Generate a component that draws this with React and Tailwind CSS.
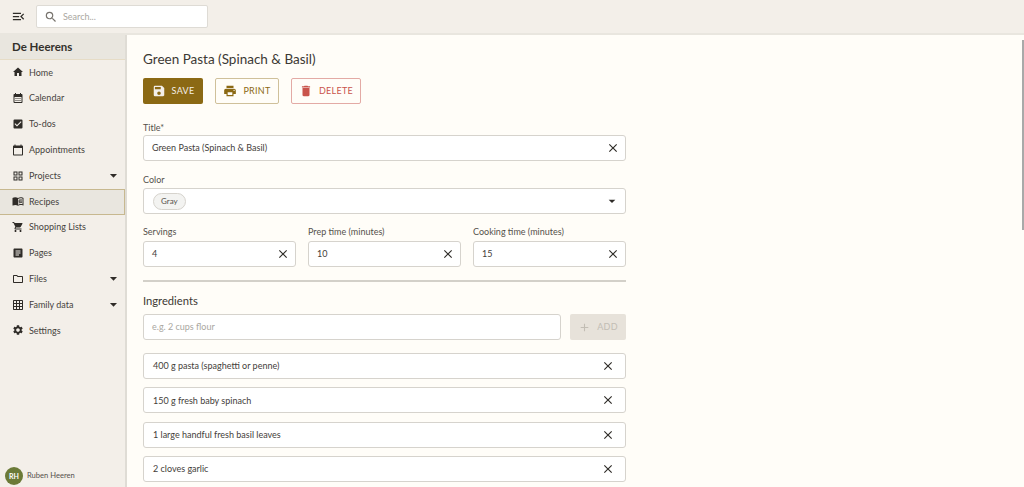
import {
  MdAdd,
  MdArrowDropDown,
  MdArticle,
  MdCalendarMonth,
  MdCalendarToday,
  MdCheckBox,
  MdClose,
  MdDelete,
  MdGridOn,
  MdHome,
  MdMenuBook,
  MdMenuOpen,
  MdOutlineFolder,
  MdOutlineGridView,
  MdPrint,
  MdSave,
  MdSearch,
  MdSettings,
  MdShoppingCart,
} from "react-icons/md";

const navItems = [
  { label: "Home", icon: MdHome },
  { label: "Calendar", icon: MdCalendarMonth },
  { label: "To-dos", icon: MdCheckBox },
  { label: "Appointments", icon: MdCalendarToday },
  { label: "Projects", icon: MdOutlineGridView, arrow: true },
  { label: "Recipes", icon: MdMenuBook, active: true },
  { label: "Shopping Lists", icon: MdShoppingCart },
  { label: "Pages", icon: MdArticle },
  { label: "Files", icon: MdOutlineFolder, arrow: true },
  { label: "Family data", icon: MdGridOn, arrow: true },
  { label: "Settings", icon: MdSettings },
];

const ingredients = [
  "400 g pasta (spaghetti or penne)",
  "150 g fresh baby spinach",
  "1 large handful fresh basil leaves",
  "2 cloves garlic",
];

const Field = ({ label, value, className = "", gap = "mb-[2px]" }) => (
  <div className={className}>
    <div className={`text-[9px] leading-[14px] pt-[1px] text-[#55514b] ${gap}`}>{label}</div>
    <div className="h-[26px] flex items-center justify-between bg-white border border-[#d6d3cd] rounded-[3px] pl-[8px] pr-[5px] text-[9px] text-[#44403a]">
      <span>{value}</span>
      <MdClose className="text-[14px] text-[#2f2c28]" />
    </div>
  </div>
);

const App = () => {
  return (
    <div className="h-screen overflow-hidden flex flex-col bg-[#fffdf8] font-['Lato','Noto_Sans',sans-serif] text-[#3c3934]">
      <header className="h-[35px] shrink-0 flex items-center bg-[#f3efe9] border-b-2 border-[#e9e6df] pl-[11px]">
        <MdMenuOpen className="text-[15px] text-[#2f2c28]" />
        <div className="ml-[10px] w-[172px] h-[23px] flex items-center bg-white border border-[#dedbd5] rounded-[2px] pl-[7px]">
          <MdSearch className="text-[14px] text-[#77736d]" />
          <span className="ml-[5px] text-[9px] text-[#aaa7a1]">Search...</span>
        </div>
      </header>

      <div className="flex-1 flex min-h-0 relative">
        <aside className="w-[127px] shrink-0 flex flex-col bg-[#f3efe9] border-r-2 border-[#dfdcd5]">
          <div className="h-[25px] flex items-center pl-[12px] bg-[#e9e6df] border-b border-[#e6dcc6] text-[11.5px] font-bold text-[#33302b]">
            De Heerens
          </div>
          <nav className="flex flex-col">
            {navItems.map((item) => (
              <div
                key={item.label}
                className={`h-[25.8px] flex items-center pl-[12px] pr-[3px] pb-[1px] text-[9px] text-[#46433d] ${
                  item.active ? "bg-[#e9e6df] border-y border-r border-[#c7b88f]" : ""
                }`}
              >
                <item.icon className="text-[12px] text-[#2f2c28] shrink-0" />
                <span className="ml-[5px] flex-1">{item.label}</span>
                {item.arrow && <MdArrowDropDown className="text-[17px] text-[#2f2c28]" />}
              </div>
            ))}
          </nav>
          <div className="mt-auto h-[22px] flex items-center pl-[5px]">
            <div className="w-[18px] h-[18px] rounded-full bg-[#6b7a37] text-white text-[7px] font-bold flex items-center justify-center">
              RH
            </div>
            <span className="ml-[4px] text-[7.6px] text-[#55514b]">Ruben Heeren</span>
          </div>
        </aside>

        <main className="flex-1 min-w-0 pl-[16px] pt-[14px]">
          <div className="w-[483px]">
            <h1 className="text-[13.5px] leading-[21px] text-[#3c3934]">Green Pasta (Spinach &amp; Basil)</h1>

            <div className="flex gap-[12px] mt-[8px]">
              <button className="h-[26px] w-[60px] flex items-center justify-center gap-[6px] bg-[#8b6914] rounded-[2px] text-[9px] tracking-[0.3px] text-[#f3efe9]">
                <MdSave className="text-[14px]" />
                SAVE
              </button>
              <button className="h-[26px] w-[64px] flex items-center justify-center gap-[6px] border border-[#cfc09a] rounded-[2px] text-[9px] tracking-[0.3px] text-[#8b6914]">
                <MdPrint className="text-[14px]" />
                PRINT
              </button>
              <button className="h-[26px] w-[70px] flex items-center justify-center gap-[6px] border border-[#e3aaa5] rounded-[2px] text-[9px] tracking-[0.3px] text-[#c9544c]">
                <MdDelete className="text-[14px]" />
                DELETE
              </button>
            </div>

            <Field label="Title*" value="Green Pasta (Spinach & Basil)" className="mt-[16px]" gap="mb-[0px]" />

            <div className="mt-[11px]">
              <div className="text-[9px] leading-[14px] pt-[1px] text-[#55514b] mb-[1px]">Color</div>
              <div className="h-[26px] flex items-center justify-between bg-white border border-[#d6d3cd] rounded-[3px] pl-[9px] pr-[5px]">
                <span className="h-[17px] px-[7px] flex items-center rounded-full bg-[#f3f3f1] border border-[#d6d3cd] text-[8px] text-[#55514b]">
                  Gray
                </span>
                <MdArrowDropDown className="text-[16px] text-[#2f2c28]" />
              </div>
            </div>

            <div className="grid grid-cols-3 gap-[12px] mt-[10px]">
              <Field label="Servings" value="4" />
              <Field label="Prep time (minutes)" value="10" />
              <Field label="Cooking time (minutes)" value="15" />
            </div>

            <div className="h-[2px] bg-[#d3d0c9] mt-[13px]" />

            <h2 className="text-[11.2px] leading-[17px] mt-[10px] text-[#3c3934]">Ingredients</h2>

            <div className="flex gap-[9px] mt-[5px]">
              <div className="flex-1 h-[26px] flex items-center bg-white border border-[#d6d3cd] rounded-[3px] pl-[8px] text-[9px] text-[#aaa7a1]">
                e.g. 2 cups flour
              </div>
              <button className="w-[56px] h-[26px] flex items-center justify-center gap-[6px] bg-[#e7e2da] rounded-[2px] text-[9px] tracking-[0.3px] text-[#c2bdb4]">
                <MdAdd className="text-[13px]" />
                ADD
              </button>
            </div>

            <div className="flex flex-col gap-[8.4px] mt-[13px]">
              {ingredients.map((text) => (
                <div
                  key={text}
                  className="h-[26px] flex items-center justify-between bg-white border border-[#d6d3cd] rounded-[3px] pl-[9px] pr-[10px] text-[9px] text-[#44403a]"
                >
                  <span>{text}</span>
                  <MdClose className="text-[14px] text-[#2f2c28]" />
                </div>
              ))}
            </div>
          </div>
        </main>

        {/* page scrollbar */}
        <div className="absolute right-0 top-[5px] w-[2px] h-[190px] bg-[#a9a9a9]" />
      </div>
    </div>
  );
};

export default App;
